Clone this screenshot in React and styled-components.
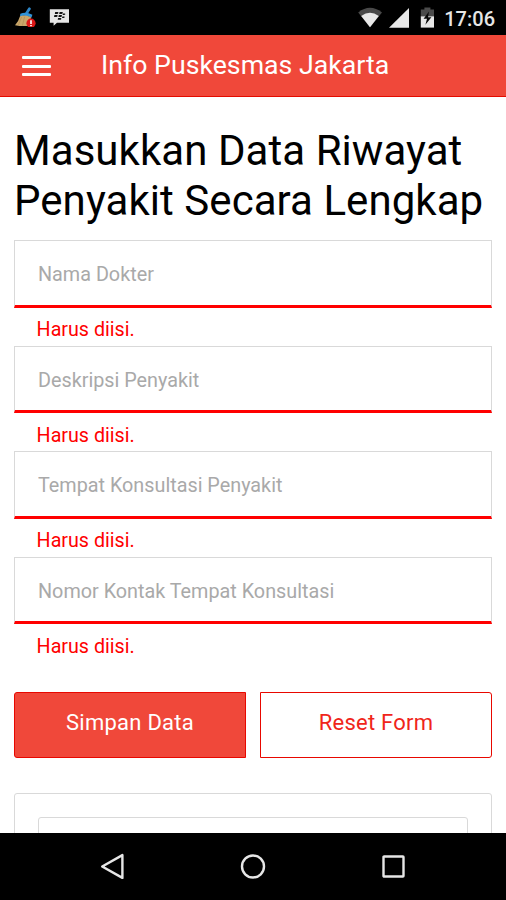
import { useState } from 'react';
import styled, { createGlobalStyle } from 'styled-components';

const fields = [
  { name: 'dokter', label: 'Nama Dokter' },
  { name: 'deskripsi', label: 'Deskripsi Penyakit' },
  { name: 'tempat', label: 'Tempat Konsultasi Penyakit' },
  { name: 'kontak', label: 'Nomor Kontak Tempat Konsultasi' },
];

const empty = { dokter: '', deskripsi: '', tempat: '', kontak: '' };

function StatusBar() {
  return (
    <Status>
      <svg width='56' height='20' viewBox='14 7 56 20'>
        <path d='M29.4 8.8 L26.4 13.4' stroke='#2d86c8' strokeWidth='2.8' strokeLinecap='round' />
        <path d='M20.3 13.8 Q26 11.2 32.4 14.8 L31.4 17.8 Q25 14.6 20 16.6 Z' fill='#2f93d8' />
        <path d='M20 16.2 Q25.5 14.2 31 17.2 L29.5 25.8 Q22 26.6 15 25.2 Q18.6 21.4 20 16.2 Z' fill='#c9a66a' />
        <path d='M21.6 17 L18.4 25 M24.6 16.8 L22.4 25.6' stroke='#ab8a50' strokeWidth='0.6' fill='none' />
        <circle cx='31' cy='23.2' r='4.6' fill='#dd1717' />
        <path d='M31 20.2 V24 M31 25 V26.3' stroke='#fff' strokeWidth='1.6' />
        <path d='M49.8 9.2 H69 V22.7 H57 L53.6 25.8 V22.7 H49.8 Z' fill='#e6e6e6' />
        <g fill='#111'>
          <path d='M55.2 12 h2.4 q1.1 0.1 0.8 1 q-0.3 0.9 -1.3 0.9 h-2.3 z' />
          <path d='M59.6 12 h2.4 q1.1 0.1 0.8 1 q-0.3 0.9 -1.3 0.9 h-2.3 z' />
          <path d='M54.4 15 h2.4 q1.1 0.1 0.8 1 q-0.3 0.9 -1.3 0.9 h-2.3 z' />
          <path d='M58.8 15 h2.4 q1.1 0.1 0.8 1 q-0.3 0.9 -1.3 0.9 h-2.3 z' />
          <path d='M63 13.4 h1.6 q1 0.1 0.7 0.9 q-0.3 0.8 -1.2 0.8 h-1.5 z' />
          <path d='M58.1 17.9 h2.4 q1.1 0.1 0.8 1 q-0.3 0.9 -1.3 0.9 h-2.3 z' />
          <path d='M62.4 16.4 h1.6 q1 0.1 0.7 0.9 q-0.3 0.8 -1.2 0.8 h-1.5 z' />
        </g>
      </svg>
      <StatusRight>
        <svg width='78' height='22' viewBox='358 6 78 22'>
          <path d='M359.2 12.4 Q371 3.2 383 12.4 L371 27.2 Z' fill='#494949' />
          <path d='M362.2 16 Q371 9.4 379.8 16 L371 27.2 Z' fill='#e8e8e8' />
          <path d='M410 8 V27.7 H390 Z' fill='#e8e8e8' />
          <path d='M425.4 7.4 H431.4 V9.4 H435 V17 H421.8 V9.4 H425.4 Z' fill='#4b4b4b' />
          <path d='M421.8 16.4 H435 V27.6 H421.8 Z' fill='#e8e8e8' />
          <path d='M430 11.4 L424.6 18.8 H428 L426.4 24.8 L432.4 17.2 H429 Z' fill='#080808' />
        </svg>
        <Clock>17:06</Clock>
      </StatusRight>
    </Status>
  );
}

export default function App() {
  const [values, setValues] = useState(empty);

  function change(e) {
    setValues({ ...values, [e.target.name]: e.target.value });
  }

  return (
    <Screen>
      <GlobalStyle />
      <StatusBar />
      <Header>
        <MenuButton aria-label='Menu'>
          <span />
          <span />
          <span />
        </MenuButton>
        <AppName>Info Puskesmas Jakarta</AppName>
      </Header>
      <Content>
        <Title>
          Masukkan Data Riwayat
          <br />
          Penyakit Secara Lengkap
        </Title>
        <form onSubmit={(e) => e.preventDefault()}>
          {fields.map((field) => (
            <Field key={field.name}>
              <Input
                name={field.name}
                placeholder={field.label}
                value={values[field.name]}
                onChange={change}
                $invalid={!values[field.name]}
              />
              {!values[field.name] && <ErrorText>Harus diisi.</ErrorText>}
            </Field>
          ))}
          <Buttons>
            <Button type='submit' $primary>
              Simpan Data
            </Button>
            <Button type='button' onClick={() => setValues(empty)}>
              Reset Form
            </Button>
          </Buttons>
        </form>
        <Panel>
          <PanelItem />
        </Panel>
      </Content>
      <NavBar>
        <svg width='26' height='28' viewBox='0 0 26 28'>
          <path d='M2.2 13.5 L22.4 2.1 V24.9 Z' />
        </svg>
        <svg width='26' height='28' viewBox='0 0 26 28'>
          <circle cx='13' cy='13.5' r='11' />
        </svg>
        <svg width='26' height='28' viewBox='0 0 26 28'>
          <rect x='3.5' y='3.5' width='20' height='20' rx='0.6' />
        </svg>
      </NavBar>
    </Screen>
  );
}

const GlobalStyle = createGlobalStyle`
  * {
    box-sizing: border-box;
  }

  body {
    margin: 0;
    background: #fff;
    font-family: Roboto, sans-serif;
  }
`;

const Screen = styled.div`
  width: 506px;
  height: 900px;
  display: flex;
  flex-direction: column;
  overflow: hidden;
`;

const Status = styled.div`
  height: 35px;
  flex: none;
  display: flex;
  align-items: flex-start;
  justify-content: space-between;
  padding: 7px 11px 0 14px;
  background: #000;
`;

const StatusRight = styled.div`
  display: flex;
  gap: 9px;
  margin-top: -1px;
`;

const Clock = styled.span`
  padding-top: 1px;
  font-size: 20px;
  font-weight: 500;
  line-height: 24px;
  color: #e6e6e6;
`;

const Header = styled.header`
  height: 62px;
  flex: none;
  display: flex;
  padding-left: 22px;
  background: #f0483a;
  border-bottom: 1px solid #e40b00;
`;

const MenuButton = styled.button`
  width: 29px;
  height: 20px;
  margin: 21px 50px 0 0;
  padding: 0;
  display: flex;
  flex-direction: column;
  justify-content: space-between;
  background: none;
  border: none;

  span {
    width: 29px;
    height: 3px;
    border-radius: 1px;
    background: #fff;
  }
`;

const AppName = styled.div`
  font-size: 26.7px;
  line-height: 61px;
  color: #fff;
`;

const Content = styled.main`
  flex: 1;
  min-height: 0;
  padding: 29px 14px 0;
  overflow: hidden;
`;

const Title = styled.h1`
  margin: 0 0 14.4px;
  font-size: 42px;
  font-weight: 400;
  line-height: 50px;
  letter-spacing: 0.06px;
  white-space: nowrap;
  color: #000;
`;

const Field = styled.div`
  height: 105.5px;
`;

const Input = styled.input`
  display: block;
  width: 100%;
  height: 67.6px;
  padding: 3px 23px 0;
  font-family: inherit;
  font-size: 19.8px;
  color: #333;
  background: #fff;
  border: 1px solid #d9d9d9;
  border-bottom: ${(props) => (props.$invalid ? '3px solid #f00' : '1px solid #d9d9d9')};
  border-radius: 0;
  outline: none;

  &::placeholder {
    color: #a9a9a9;
    opacity: 1;
  }
`;

const ErrorText = styled.div`
  padding: 10.3px 0 0 22.6px;
  font-size: 19.7px;
  line-height: 24px;
  color: #f00;
`;

const Buttons = styled.div`
  display: grid;
  grid-template-columns: 1fr 1fr;
  gap: 14px;
  margin-top: 29.6px;
`;

const Button = styled.button`
  height: 66px;
  padding: 0 0 5px;
  font-family: inherit;
  font-size: 22px;
  letter-spacing: 0.25px;
  color: ${(props) => (props.$primary ? '#fff' : '#f0251a')};
  background: ${(props) => (props.$primary ? '#f0483a' : '#fff')};
  border: 1px solid #e80800;
  border-radius: ${(props) => (props.$primary ? '3px 0 0 3px' : '0 3px 3px 0')};
`;

const Panel = styled.section`
  height: 120px;
  margin-top: 35px;
  padding: 23px;
  border: 1px solid #d9d9d9;
  border-radius: 3px;
`;

const PanelItem = styled.div`
  height: 80px;
  border: 1px solid #d9d9d9;
  border-radius: 3px;
`;

const NavBar = styled.nav`
  height: 67px;
  flex: none;
  display: flex;
  justify-content: space-between;
  align-items: center;
  padding: 0 100px 0 100px;
  background: #000;

  svg {
    fill: none;
    stroke: #e6e6e6;
    stroke-width: 2.4;
    stroke-linejoin: round;
  }
`;
